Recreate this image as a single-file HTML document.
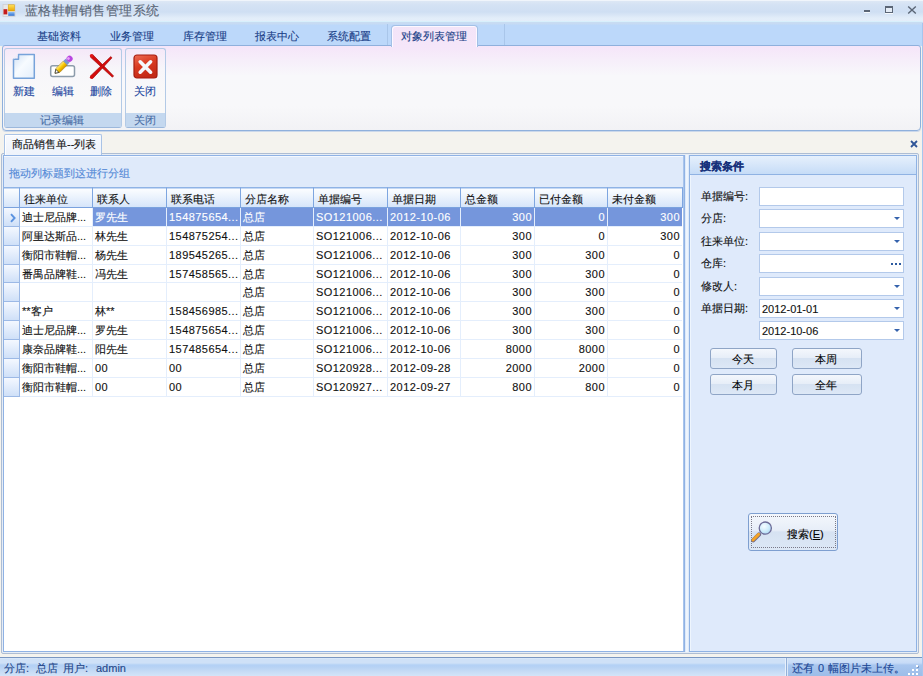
<!DOCTYPE html>
<html><head><meta charset="utf-8">
<style>
*{box-sizing:border-box;margin:0;padding:0}
html,body{width:923px;height:676px;overflow:hidden;background:#f4f3ee;font-family:"Liberation Sans",sans-serif;font-size:11px;color:#000}
.t{-webkit-text-stroke:0.12px currentColor}
.a{position:absolute}
.t{position:absolute;white-space:nowrap;line-height:1}
/* title bar */
#title{left:0;top:0;width:923px;height:23px;background:linear-gradient(#f0f5fb 0,#f0f5fb 1px,#dde8f5 1px,#d4e2f4 5px,#cfdff3 12px,#e2edf9 18px,#e4eefa 21px,#d8f0fc 21px,#d8f0fc 22px,#c8dcf2 22px)}
#tabbar{left:0;top:23px;width:923px;height:23px;background:linear-gradient(#c7dbf3 0,#c7dbf3 1px,#bcd8fa 2px,#bcd8fa 100%)}
.tabtxt{color:#1a3f88;font-size:11px}
#ribbon{left:2px;top:45px;width:919px;height:86px;border:1px solid #8fb0dc;box-shadow:0 1px 0 #cbd8ea;border-radius:3px 3px 4px 4px;background:linear-gradient(#f5e5f9 0,#f6eefa 14px,#f8f8fb 30px,#f8f8fa 60px,#f2f2f5 84px)}
.grp{border:1px solid #b3cae6;border-bottom-color:#9cb8dc;border-radius:3px;background:linear-gradient(#f5e8f8 0,#f7f6fa 20px,#f9f9f9 50px)}
.glab{background:#c4d8ef;color:#4a6ea6}
.btnlab{color:#1d47a0}
#doctab{left:4px;top:134px;width:98px;height:21px;border:1px solid #a9c3e6;border-bottom:none;border-radius:2px 2px 0 0;background:linear-gradient(#f7faff,#eef3fb);box-shadow:inset 1px 1px 0 #fff;z-index:2}
#status{left:0;top:657px;width:923px;height:19px;border-top:1px solid #7896c2;background:linear-gradient(#e0ecfb 0,#cfe1f7 1px,#cfe1f7 5px,#b3d1f5 7px,#b6d2f4 9px,#c8dcf5 14px,#d3e4f8 18px)}
#status2{left:786px;top:658px;width:137px;height:18px;border-left:1px solid #93b0d8;box-shadow:-1px 0 0 #e8f0fb, inset 1px 0 0 #dbe8f8;background:linear-gradient(#d2e3f8 0,#c6dbf7 5px,#a9c7ef 7px,#a3c2ec 12px,#9dbde8 18px)}

/* content */
#cont{left:1px;top:153px;width:918px;height:501px;border:1px solid #aebdd3;border-radius:2px;background:#e6edf6}
#gridbox{left:3px;top:155px;width:682px;height:497px;border:1px solid #8fb2e4;background:#fff;box-shadow:inset -1px 0 0 #a8c4ec}
#splitter{left:685px;top:155px;width:4px;height:497px;background:linear-gradient(90deg,#d3e2f7,#f1f7fe 40%,#eef5fd 60%,#d5e4f8)}
#grppanel{left:4px;top:156px;width:679px;height:31px;background:#dfeafa;border-top:1px solid #f4f8fe}
.hd{top:187px;height:21px;border-top:1px solid #8fb3e5;border-bottom:1px solid #7aa2de;border-right:1px solid #7ea6e0;background:linear-gradient(#fdfeff 0,#edf4fd 8px,#d6e5fa 19px);box-shadow:inset 0 1px 0 #c4d8f4}
.hdt{top:194px;color:#111}
.ind{left:4px;width:16px;height:19px;border-right:1px solid #9cb9e6;border-bottom:1px solid #9cb9e6;background:linear-gradient(#f4f8ff,#cfe0f8)}
.rl{left:20px;width:662px;height:1px;background:#e4eefc}
.vl{top:208px;height:189px;width:1px;background:#e4eefc}
.ct{color:#111}
.sel{color:#fff}
#rpanel{left:689px;top:155px;width:228px;height:497px;border:1px solid #8fb2e3;background:#dfeafb;box-shadow:inset 1px 1px 0 #eef5fd}
#rhead{left:690px;top:156px;width:226px;height:19px;border-bottom:1px solid #8fb2e3;background:linear-gradient(#e6f0fc,#c6dcf7)}
.lbl{color:#111}
.inp{left:759px;width:145px;height:19px;background:#fff;border:1px solid #b3c9ea}
.dd{position:absolute;right:3px;top:7px;width:0;height:0;border-left:3px solid transparent;border-right:3px solid transparent;border-top:3px solid #3562ac}
.btn{height:21px;border:1px solid #8fa5c6;border-radius:3px;background:linear-gradient(#f4f7fc 0,#e7eef8 45%,#d6e2f2 50%,#dde8f6 100%);color:#111}
</style></head><body>
<!-- title bar -->
<div id="title" class="a"></div>
<svg class="a" style="left:2px;top:3px" width="14" height="14" viewBox="0 0 14 14">
<defs><linearGradient id="gy" x1="0" y1="0" x2="0" y2="1"><stop offset="0" stop-color="#ffe25a"/><stop offset="1" stop-color="#eaa400"/></linearGradient>
<linearGradient id="gb" x1="0" y1="0" x2="0" y2="1"><stop offset="0" stop-color="#8fc0f5"/><stop offset="1" stop-color="#2f6fd0"/></linearGradient></defs>
<rect x="1" y="1.5" width="12" height="12" fill="#e8e8ea" stroke="#cfd0d4" stroke-width="0.8"/>
<rect x="6.2" y="1.8" width="6.4" height="6.2" fill="url(#gy)" stroke="#d49a10" stroke-width="0.5"/>
<rect x="1.5" y="6.2" width="3.8" height="5.2" fill="#c41c1c"/>
<rect x="6.2" y="9" width="6.4" height="3.8" fill="url(#gb)"/>
</svg>
<div class="t" style="left:25px;top:4px;font-size:13px;letter-spacing:0.45px;color:#5b6777">蓝格鞋帽销售管理系统</div>
<!-- window buttons -->
<div class="a" style="left:864px;top:10px;width:6px;height:2px;background:#5b6676;box-shadow:0 1px 0 #f4f8fc"></div>
<div class="a" style="left:885px;top:6px;width:8px;height:7px;border:1px solid #5b6676;border-top:2px solid #5b6676;background:#e4ecf6;box-shadow:0 1px 0 #f4f8fc"></div>
<svg class="a" style="left:907px;top:5px" width="10" height="10" viewBox="0 0 10 10"><path d="M1.2 1.5 L8.8 8.5 M8.8 1.5 L1.2 8.5" stroke="#5b6676" stroke-width="1.4"/></svg>
<!-- tab bar -->
<div id="tabbar" class="a"></div>
<div class="a" style="left:387px;top:24px;width:1px;height:21px;background:#a9c6ea"></div>
<div class="a" style="left:504px;top:24px;width:1px;height:21px;background:#a9c6ea"></div>
<div class="t tabtxt" style="left:37px;top:31px">基础资料</div>
<div class="t tabtxt" style="left:110px;top:31px">业务管理</div>
<div class="t tabtxt" style="left:183px;top:31px">库存管理</div>
<div class="t tabtxt" style="left:255px;top:31px">报表中心</div>
<div class="t tabtxt" style="left:327px;top:31px">系统配置</div>

<!-- ribbon -->
<div id="ribbon" class="a"></div>
<div class="a" style="left:391px;top:25px;width:87px;height:22px;border:1px solid #a3c0e6;border-bottom:none;border-radius:4px 4px 0 0;background:linear-gradient(#f3e4f8,#f5e6f9);box-shadow:inset 1px 1px 0 #fdf8ff,inset -1px 0 0 #fdf8ff"></div>
<div class="t tabtxt" style="left:401px;top:31px">对象列表管理</div>

<div class="a grp" style="left:4px;top:48px;width:118px;height:80px"></div>
<div class="a glab" style="left:5px;top:113px;width:116px;height:14px"></div>
<div class="t glab" style="left:40px;top:115px;background:none">记录编辑</div>
<div class="a grp" style="left:125px;top:48px;width:41px;height:80px"></div>
<div class="a glab" style="left:126px;top:113px;width:39px;height:14px"></div>
<div class="t glab" style="left:134px;top:115px;background:none">关闭</div>

<div class="t btnlab" style="left:13px;top:86px">新建</div>
<div class="t btnlab" style="left:52px;top:86px">编辑</div>
<div class="t btnlab" style="left:90px;top:86px">删除</div>
<div class="t btnlab" style="left:134px;top:86px">关闭</div>


<!-- ribbon icons -->
<svg class="a" style="left:12px;top:53px" width="25" height="27" viewBox="0 0 25 27">
<defs><linearGradient id="gdoc" x1="0" y1="0" x2="1" y2="1"><stop offset="0" stop-color="#cfe0f4"/><stop offset="0.45" stop-color="#f7fbff"/><stop offset="1" stop-color="#e3eefb"/></linearGradient></defs>
<path d="M6.5 1.5 H22.3 V25.3 H1.5 V6.3 H6.5 Z" fill="url(#gdoc)" stroke="#77a3da" stroke-width="1.5" stroke-linejoin="round"/>
<path d="M1.6 5.8 L6 1.6" stroke="#e8eef8" stroke-width="1"/>
</svg>
<svg class="a" style="left:49px;top:54px" width="28" height="24" viewBox="0 0 28 24">
<defs><linearGradient id="gpen" x1="0" y1="0" x2="0" y2="1"><stop offset="0" stop-color="#ffe98a"/><stop offset="0.5" stop-color="#f8c800"/><stop offset="1" stop-color="#d49400"/></linearGradient></defs>
<rect x="1.7" y="11.8" width="23.8" height="10.6" rx="2" fill="#fff" stroke="#8d9cab" stroke-width="1.5"/>
<g transform="translate(6,19.3) rotate(-45)">
<path d="M0 0 L4.2 -2.8 H14.5 V2.8 H4.2 Z" fill="url(#gpen)" stroke="#a88010" stroke-width="0.5"/>
<path d="M0 0 L3.4 -2.2 V2.2 Z" fill="#fff" stroke="#222" stroke-width="0.7"/>
<rect x="14.5" y="-2.8" width="3.4" height="5.6" fill="#7896d2"/>
<rect x="17.6" y="-3" width="6" height="6" rx="2.8" fill="#b845e0"/>
<circle cx="20" cy="-1" r="1.4" fill="#e7a2f7"/>
</g>
</svg>
<svg class="a" style="left:88px;top:53px" width="28" height="27" viewBox="0 0 28 27">
<path d="M2.32 4.02 L24.37 24.25 L25.63 22.95 L4.68 1.58 Z" fill="#d40c0c" stroke="#9a0a0a" stroke-width="0.6" stroke-linejoin="round"/>
<path d="M22.76 3.57 L2.39 23.00 L4.81 25.40 L24.04 4.83 Z" fill="#d40c0c" stroke="#9a0a0a" stroke-width="0.6" stroke-linejoin="round"/>
<circle cx="3.5" cy="2.8" r="1.7" fill="#e01818"/><circle cx="3.6" cy="24.2" r="1.7" fill="#d40c0c"/>
</svg>
<svg class="a" style="left:132px;top:53px" width="27" height="27" viewBox="0 0 27 27">
<defs><linearGradient id="gcl" x1="0" y1="0" x2="0.4" y2="1"><stop offset="0" stop-color="#ee6e55"/><stop offset="0.5" stop-color="#d93b22"/><stop offset="1" stop-color="#c42a16"/></linearGradient></defs>
<rect x="2" y="2" width="23" height="23" rx="3" fill="url(#gcl)" stroke="#a51d10" stroke-width="1.2"/>
<path d="M8.2 8.8 L18.6 19.2 M18.6 8.8 L8.2 19.2" stroke="#f4f8fc" stroke-width="3.6" stroke-linecap="round"/>
</svg>

<!-- doc tab -->
<div id="doctab" class="a"></div>
<div class="t" style="left:12px;top:139px;color:#111;z-index:3">商品销售单--列表</div>
<svg class="a" style="left:910px;top:140px" width="8" height="8" viewBox="0 0 8 8"><path d="M1 1 L7 7 M7 1 L1 7" stroke="#2f5597" stroke-width="1.8"/></svg>


<!-- content -->
<div id="cont" class="a"></div>
<div id="gridbox" class="a"></div>
<div id="splitter" class="a"></div>
<div id="grppanel" class="a"></div>
<div class="t" style="left:9px;top:168px;color:#5288d6">拖动列标题到这进行分组</div>
<div class="a hd" style="left:4px;width:16px"></div>
<div class="a hd" style="left:20px;width:73px"></div>
<div class="t hdt" style="left:24px">往来单位</div>
<div class="a hd" style="left:93px;width:74px"></div>
<div class="t hdt" style="left:97px">联系人</div>
<div class="a hd" style="left:167px;width:74px"></div>
<div class="t hdt" style="left:171px">联系电话</div>
<div class="a hd" style="left:241px;width:73px"></div>
<div class="t hdt" style="left:245px">分店名称</div>
<div class="a hd" style="left:314px;width:74px"></div>
<div class="t hdt" style="left:318px">单据编号</div>
<div class="a hd" style="left:388px;width:73px"></div>
<div class="t hdt" style="left:392px">单据日期</div>
<div class="a hd" style="left:461px;width:74px"></div>
<div class="t hdt" style="left:465px">总金额</div>
<div class="a hd" style="left:535px;width:73px"></div>
<div class="t hdt" style="left:539px">已付金额</div>
<div class="a hd" style="left:608px;width:75px"></div>
<div class="t hdt" style="left:612px">未付金额</div>
<div class="a ind" style="top:208px;height:19px"></div>
<div class="a" style="left:93px;top:208px;width:589px;height:18px;background:#7596dc"></div>
<div class="a rl" style="top:226px"></div>
<div class="t ct" style="left:22px;top:212px">迪士尼品牌...</div>
<div class="t ct sel" style="left:95px;top:212px">罗先生</div>
<div class="t ct sel" style="left:169px;top:212px;letter-spacing:0.45px">154875654...</div>
<div class="t ct sel" style="left:243px;top:212px">总店</div>
<div class="t ct sel" style="left:316px;top:212px;letter-spacing:0.45px">SO121006...</div>
<div class="t ct sel" style="left:390px;top:212px;letter-spacing:0.45px">2012-10-06</div>
<div class="t ct sel" style="left:460px;width:72px;top:212px;text-align:right;letter-spacing:0.45px">300</div>
<div class="t ct sel" style="left:534px;width:71px;top:212px;text-align:right;letter-spacing:0.45px">0</div>
<div class="t ct sel" style="left:607px;width:73px;top:212px;text-align:right;letter-spacing:0.45px">300</div>
<div class="a ind" style="top:227px;height:19px"></div>
<div class="a rl" style="top:245px"></div>
<div class="t ct" style="left:22px;top:231px">阿里达斯品...</div>
<div class="t ct" style="left:95px;top:231px">林先生</div>
<div class="t ct" style="left:169px;top:231px;letter-spacing:0.45px">154875254...</div>
<div class="t ct" style="left:243px;top:231px">总店</div>
<div class="t ct" style="left:316px;top:231px;letter-spacing:0.45px">SO121006...</div>
<div class="t ct" style="left:390px;top:231px;letter-spacing:0.45px">2012-10-06</div>
<div class="t ct" style="left:460px;width:72px;top:231px;text-align:right;letter-spacing:0.45px">300</div>
<div class="t ct" style="left:534px;width:71px;top:231px;text-align:right;letter-spacing:0.45px">0</div>
<div class="t ct" style="left:607px;width:73px;top:231px;text-align:right;letter-spacing:0.45px">300</div>
<div class="a ind" style="top:246px;height:19px"></div>
<div class="a rl" style="top:264px"></div>
<div class="t ct" style="left:22px;top:250px">衡阳市鞋帽...</div>
<div class="t ct" style="left:95px;top:250px">杨先生</div>
<div class="t ct" style="left:169px;top:250px;letter-spacing:0.45px">189545265...</div>
<div class="t ct" style="left:243px;top:250px">总店</div>
<div class="t ct" style="left:316px;top:250px;letter-spacing:0.45px">SO121006...</div>
<div class="t ct" style="left:390px;top:250px;letter-spacing:0.45px">2012-10-06</div>
<div class="t ct" style="left:460px;width:72px;top:250px;text-align:right;letter-spacing:0.45px">300</div>
<div class="t ct" style="left:534px;width:71px;top:250px;text-align:right;letter-spacing:0.45px">300</div>
<div class="t ct" style="left:607px;width:73px;top:250px;text-align:right;letter-spacing:0.45px">0</div>
<div class="a ind" style="top:265px;height:18px"></div>
<div class="a rl" style="top:282px"></div>
<div class="t ct" style="left:22px;top:269px">番禺品牌鞋...</div>
<div class="t ct" style="left:95px;top:269px">冯先生</div>
<div class="t ct" style="left:169px;top:269px;letter-spacing:0.45px">157458565...</div>
<div class="t ct" style="left:243px;top:269px">总店</div>
<div class="t ct" style="left:316px;top:269px;letter-spacing:0.45px">SO121006...</div>
<div class="t ct" style="left:390px;top:269px;letter-spacing:0.45px">2012-10-06</div>
<div class="t ct" style="left:460px;width:72px;top:269px;text-align:right;letter-spacing:0.45px">300</div>
<div class="t ct" style="left:534px;width:71px;top:269px;text-align:right;letter-spacing:0.45px">300</div>
<div class="t ct" style="left:607px;width:73px;top:269px;text-align:right;letter-spacing:0.45px">0</div>
<div class="a ind" style="top:283px;height:19px"></div>
<div class="a rl" style="top:301px"></div>
<div class="t ct" style="left:243px;top:287px">总店</div>
<div class="t ct" style="left:316px;top:287px;letter-spacing:0.45px">SO121006...</div>
<div class="t ct" style="left:390px;top:287px;letter-spacing:0.45px">2012-10-06</div>
<div class="t ct" style="left:460px;width:72px;top:287px;text-align:right;letter-spacing:0.45px">300</div>
<div class="t ct" style="left:534px;width:71px;top:287px;text-align:right;letter-spacing:0.45px">300</div>
<div class="t ct" style="left:607px;width:73px;top:287px;text-align:right;letter-spacing:0.45px">0</div>
<div class="a ind" style="top:302px;height:19px"></div>
<div class="a rl" style="top:320px"></div>
<div class="t ct" style="left:22px;top:306px">**客户</div>
<div class="t ct" style="left:95px;top:306px">林**</div>
<div class="t ct" style="left:169px;top:306px;letter-spacing:0.45px">158456985...</div>
<div class="t ct" style="left:243px;top:306px">总店</div>
<div class="t ct" style="left:316px;top:306px;letter-spacing:0.45px">SO121006...</div>
<div class="t ct" style="left:390px;top:306px;letter-spacing:0.45px">2012-10-06</div>
<div class="t ct" style="left:460px;width:72px;top:306px;text-align:right;letter-spacing:0.45px">300</div>
<div class="t ct" style="left:534px;width:71px;top:306px;text-align:right;letter-spacing:0.45px">300</div>
<div class="t ct" style="left:607px;width:73px;top:306px;text-align:right;letter-spacing:0.45px">0</div>
<div class="a ind" style="top:321px;height:19px"></div>
<div class="a rl" style="top:339px"></div>
<div class="t ct" style="left:22px;top:325px">迪士尼品牌...</div>
<div class="t ct" style="left:95px;top:325px">罗先生</div>
<div class="t ct" style="left:169px;top:325px;letter-spacing:0.45px">154875654...</div>
<div class="t ct" style="left:243px;top:325px">总店</div>
<div class="t ct" style="left:316px;top:325px;letter-spacing:0.45px">SO121006...</div>
<div class="t ct" style="left:390px;top:325px;letter-spacing:0.45px">2012-10-06</div>
<div class="t ct" style="left:460px;width:72px;top:325px;text-align:right;letter-spacing:0.45px">300</div>
<div class="t ct" style="left:534px;width:71px;top:325px;text-align:right;letter-spacing:0.45px">300</div>
<div class="t ct" style="left:607px;width:73px;top:325px;text-align:right;letter-spacing:0.45px">0</div>
<div class="a ind" style="top:340px;height:19px"></div>
<div class="a rl" style="top:358px"></div>
<div class="t ct" style="left:22px;top:344px">康奈品牌鞋...</div>
<div class="t ct" style="left:95px;top:344px">阳先生</div>
<div class="t ct" style="left:169px;top:344px;letter-spacing:0.45px">157485654...</div>
<div class="t ct" style="left:243px;top:344px">总店</div>
<div class="t ct" style="left:316px;top:344px;letter-spacing:0.45px">SO121006...</div>
<div class="t ct" style="left:390px;top:344px;letter-spacing:0.45px">2012-10-06</div>
<div class="t ct" style="left:460px;width:72px;top:344px;text-align:right;letter-spacing:0.45px">8000</div>
<div class="t ct" style="left:534px;width:71px;top:344px;text-align:right;letter-spacing:0.45px">8000</div>
<div class="t ct" style="left:607px;width:73px;top:344px;text-align:right;letter-spacing:0.45px">0</div>
<div class="a ind" style="top:359px;height:19px"></div>
<div class="a rl" style="top:377px"></div>
<div class="t ct" style="left:22px;top:363px">衡阳市鞋帽...</div>
<div class="t ct" style="left:95px;top:363px;letter-spacing:0.45px">00</div>
<div class="t ct" style="left:169px;top:363px;letter-spacing:0.45px">00</div>
<div class="t ct" style="left:243px;top:363px">总店</div>
<div class="t ct" style="left:316px;top:363px;letter-spacing:0.45px">SO120928...</div>
<div class="t ct" style="left:390px;top:363px;letter-spacing:0.45px">2012-09-28</div>
<div class="t ct" style="left:460px;width:72px;top:363px;text-align:right;letter-spacing:0.45px">2000</div>
<div class="t ct" style="left:534px;width:71px;top:363px;text-align:right;letter-spacing:0.45px">2000</div>
<div class="t ct" style="left:607px;width:73px;top:363px;text-align:right;letter-spacing:0.45px">0</div>
<div class="a ind" style="top:378px;height:19px"></div>
<div class="a rl" style="top:396px"></div>
<div class="t ct" style="left:22px;top:382px">衡阳市鞋帽...</div>
<div class="t ct" style="left:95px;top:382px;letter-spacing:0.45px">00</div>
<div class="t ct" style="left:169px;top:382px;letter-spacing:0.45px">00</div>
<div class="t ct" style="left:243px;top:382px">总店</div>
<div class="t ct" style="left:316px;top:382px;letter-spacing:0.45px">SO120927...</div>
<div class="t ct" style="left:390px;top:382px;letter-spacing:0.45px">2012-09-27</div>
<div class="t ct" style="left:460px;width:72px;top:382px;text-align:right;letter-spacing:0.45px">800</div>
<div class="t ct" style="left:534px;width:71px;top:382px;text-align:right;letter-spacing:0.45px">800</div>
<div class="t ct" style="left:607px;width:73px;top:382px;text-align:right;letter-spacing:0.45px">0</div>
<div class="a vl" style="left:92px;top:208px;height:188px"></div>
<div class="a vl" style="left:166px;top:208px;height:188px"></div>
<div class="a vl" style="left:240px;top:208px;height:188px"></div>
<div class="a vl" style="left:313px;top:208px;height:188px"></div>
<div class="a vl" style="left:387px;top:208px;height:188px"></div>
<div class="a vl" style="left:460px;top:208px;height:188px"></div>
<div class="a vl" style="left:534px;top:208px;height:188px"></div>
<div class="a vl" style="left:607px;top:208px;height:188px"></div>
<svg class="a" style="left:9px;top:213px" width="8" height="10" viewBox="0 0 8 10"><path d="M2 1.2 L5.6 5 L2 8.8" fill="none" stroke="#5a92e0" stroke-width="1.9"/></svg>

<!-- right panel -->
<div id="rpanel" class="a"></div>
<div id="rhead" class="a"></div>
<div class="t" style="left:700px;top:161px;color:#15307a;font-weight:bold">搜索条件</div>
<div class="t lbl" style="left:701px;top:191px">单据编号:</div>
<div class="t lbl" style="left:701px;top:213px">分店:</div>
<div class="t lbl" style="left:701px;top:236px">往来单位:</div>
<div class="t lbl" style="left:701px;top:258px">仓库:</div>
<div class="t lbl" style="left:701px;top:281px">修改人:</div>
<div class="t lbl" style="left:701px;top:303px">单据日期:</div>
<div class="a inp" style="top:187px"></div>
<div class="a inp" style="top:209px"><div class="dd"></div></div>
<div class="a inp" style="top:232px"><div class="dd"></div></div>
<div class="a inp" style="top:254px"><div class="a" style="left:131px;top:8px;width:2px;height:2px;background:#2c5aa0;box-shadow:4px 0 0 #2c5aa0,8px 0 0 #2c5aa0"></div></div>
<div class="a inp" style="top:277px"><div class="dd"></div></div>
<div class="a inp" style="top:299px"><div class="dd"></div><div class="t" style="left:2px;top:4px;color:#111">2012-01-01</div></div>
<div class="a inp" style="top:321px"><div class="dd"></div><div class="t" style="left:2px;top:4px;color:#111">2012-10-06</div></div>
<div class="a btn" style="left:710px;top:348px;width:67px"></div>
<div class="a btn" style="left:792px;top:348px;width:70px"></div>
<div class="a btn" style="left:710px;top:374px;width:67px"></div>
<div class="a btn" style="left:792px;top:374px;width:70px"></div>
<div class="t" style="left:732px;top:354px">今天</div>
<div class="t" style="left:815px;top:354px">本周</div>
<div class="t" style="left:732px;top:380px">本月</div>
<div class="t" style="left:815px;top:380px">全年</div>
<div class="a btn" style="left:748px;top:513px;width:90px;height:38px;border-color:#7e9fd0"></div>
<div class="a" style="left:751px;top:516px;width:85px;height:32px;border:1px dotted #7a7a88"></div>
<div class="t" style="left:787px;top:529px">搜索(<u style="text-underline-offset:1px">E</u>)</div>

<!-- status bar -->
<div id="status" class="a"></div>
<div class="t" style="left:4px;top:663px;color:#24478a">分店:</div><div class="t" style="left:36px;top:663px;color:#24478a">总店</div><div class="t" style="left:63px;top:663px;color:#24478a">用户:</div><div class="t" style="left:96px;top:663px;color:#24478a">admin</div>
<div id="status2" class="a"></div>
<div class="t" style="left:792px;top:663px;color:#1c4796;word-spacing:1px">还有 0 幅图片未上传。</div>

<!-- window right edge -->
<div class="a" style="left:922px;top:23px;width:1px;height:653px;background:#a6c6ee"></div>
<!-- magnifier -->
<svg class="a" style="left:750px;top:519px" width="24" height="24" viewBox="0 0 24 24">
<defs><radialGradient id="glens" cx="0.4" cy="0.35" r="0.7"><stop offset="0" stop-color="#f6fcff"/><stop offset="0.6" stop-color="#cdecfb"/><stop offset="1" stop-color="#a9d6f2"/></radialGradient></defs>
<path d="M9 15.5 L3.2 21.3" stroke="#6e6a8a" stroke-width="4.2" stroke-linecap="round"/>
<path d="M8.6 15.4 L3 21" stroke="#f3a326" stroke-width="3" stroke-linecap="round"/>
<circle cx="15.3" cy="9.1" r="6.1" fill="url(#glens)" stroke="#6d6c98" stroke-width="1.3"/>
</svg>
<!-- size grip -->
<div class="a" style="left:916px;top:665px;width:2px;height:2px;background:#fff;box-shadow:1px 1px 0 #7d9cc8,-4px 4px 0 #fff,0 4px 0 #fff,-8px 8px 0 #fff,-4px 8px 0 #fff,0 8px 0 #fff"></div>
</body></html>
